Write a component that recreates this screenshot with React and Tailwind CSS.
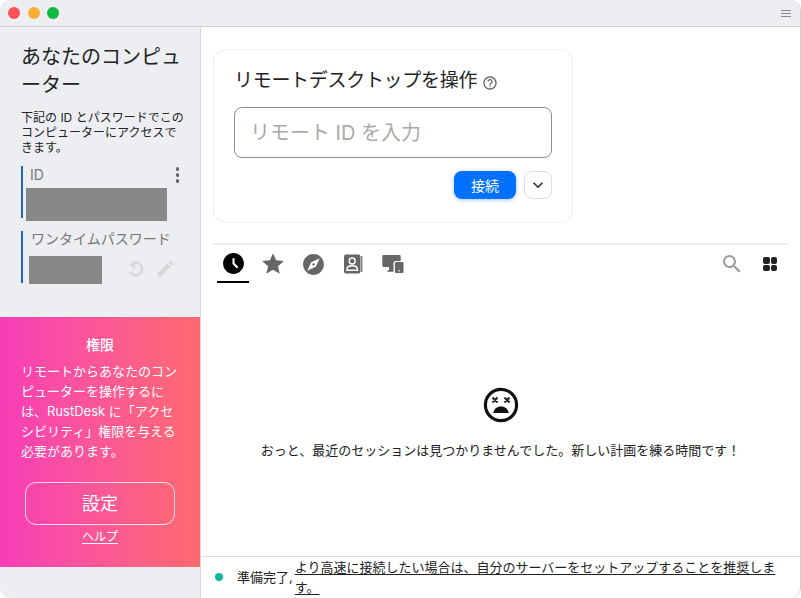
import { MdAccessTimeFilled, MdStar, MdExplore, MdEdit, MdHelpOutline, MdSearch, MdKeyboardArrowDown } from 'react-icons/md';

const font = { fontFamily: '' };

const ContactsIcon = () => (
    <svg width="20" height="20" viewBox="0 0 20 20">
        <rect x="1" y="0.5" width="16.5" height="19" rx="2" fill="#666" />
        <rect x="18.2" y="2" width="1.2" height="16" rx="0.6" fill="#666" />
        <circle cx="9.2" cy="7" r="3" fill="none" stroke="#fff" strokeWidth="1.4" />
        <path d="M4 16.2v-1.2c0-2 2.4-3.2 5.2-3.2s5.2 1.2 5.2 3.2v1.2z" fill="none" stroke="#fff" strokeWidth="1.4" />
    </svg>
);

const DevicesIcon = () => (
    <svg width="22" height="20" viewBox="0 0 22 20">
        <path d="M1.5 1h16a1.2 1.2 0 0 1 1.2 1.2V7h-5.2a2 2 0 0 0-2 2v4H1.5A1.2 1.2 0 0 1 .3 11.8V2.2A1.2 1.2 0 0 1 1.5 1z" fill="#666" />
        <path d="M7 13h4.5v4.8H5.5v-1.6H7z" fill="#666" />
        <path d="M14.2 8h6a1.3 1.3 0 0 1 1.3 1.3v8.4a1.3 1.3 0 0 1-1.3 1.3h-6a1.3 1.3 0 0 1-1.3-1.3V9.3A1.3 1.3 0 0 1 14.2 8zm2 8.2v1h2v-1z" fill="#666" fillRule="evenodd" />
    </svg>
);

const RefreshIcon = () => (
    <svg width="18" height="18" viewBox="0 0 18 18" fill="none" stroke="#d8d8d8" strokeWidth="2.4">
        <path d="M5.2 3.6A6.4 6.4 0 1 1 3.2 12" />
        <path d="M1.6 3.4h6.2v6.2z" fill="#d8d8d8" stroke="none" />
    </svg>
);

const SadFace = () => (
    <svg width="36" height="36" viewBox="0 0 36 36">
        <circle cx="18" cy="18" r="15.6" fill="none" stroke="#111" strokeWidth="3.2" />
        <path d="M9.5 10.5l5 5m0-5l-5 5M21.5 10.5l5 5m0-5l-5 5" stroke="#222" strokeWidth="2.2" fill="none" />
        <path d="M10.2 26c.6-4 3.6-6.6 7.8-6.6s7.2 2.6 7.8 6.6z" fill="#111" />
    </svg>
);

const GridIcon = () => (
    <div className="grid grid-cols-2 gap-[1px]">
        <span className="block w-[6.5px] h-[6.5px] rounded-[2px] bg-[#222]" />
        <span className="block w-[6.5px] h-[6.5px] rounded-[2px] bg-[#222]" />
        <span className="block w-[6.5px] h-[6.5px] rounded-[2px] bg-[#222]" />
        <span className="block w-[6.5px] h-[6.5px] rounded-[2px] bg-[#222]" />
    </div>
);

const Sidebar = () => (
    <div className="w-[201px] shrink-0 flex flex-col border-r border-[#d6d6d8] bg-[#eceef2]">
        <div className="h-[290px] shrink-0 pl-[21px] pr-[14px] pt-[16px]">
            <h1 className="text-[20px] leading-[28px] text-[#222]">あなたのコンピューター</h1>
            <p className="mt-[11px] text-[12px] leading-[15px] text-[#222]">
                下記の ID とパスワードでこのコンピューターにアクセスできます。
            </p>
            <div className="mt-[11px] h-[52px] border-l-2 border-[#1f66c8] relative">
                <div className="flex justify-between items-start pl-[7px] pr-[6px]">
                    <span className="text-[14px] leading-[18px] text-[#777]">ID</span>
                    <div className="flex flex-col gap-[2.5px] mt-[1px] mr-[1px]">
                        <span className="block w-[3.5px] h-[3.5px] rounded-full bg-[#666]" />
                        <span className="block w-[3.5px] h-[3.5px] rounded-full bg-[#666]" />
                        <span className="block w-[3.5px] h-[3.5px] rounded-full bg-[#666]" />
                    </div>
                </div>
                <div className="absolute left-[3px] top-[22px] w-[141px] h-[33px] bg-[#888]" />
            </div>
            <div className="mt-[13px] h-[52px] border-l-2 border-[#1f66c8] relative">
                <div className="pl-[8px] text-[14px] leading-[16px] text-[#777]">ワンタイムパスワード</div>
                <div className="absolute left-[6px] top-[25px] w-[73px] h-[28px] bg-[#888]" />
                <div className="absolute left-[104px] top-[27px] flex items-center gap-[10px]">
                    <RefreshIcon />
                    <MdEdit size={21} color="#d8d8d8" />
                </div>
            </div>
        </div>
        <div className="h-[250px] shrink-0 bg-gradient-to-r from-[#f83cb7] to-[#ff6a6e] px-[21px] pt-[18px] text-white">
            <div className="text-center text-[14px] leading-[20px] font-medium">権限</div>
            <p className="mt-[6px] text-[13px] leading-[20px]">
                リモートからあなたのコンピューターを操作するには、RustDesk に「アクセシビリティ」権限を与える必要があります。
            </p>
            <div className="mt-[21px] mx-[4px] h-[43px] rounded-[11px] border border-white/80 flex items-center justify-center text-[18px]">
                設定
            </div>
            <div className="mt-[4px] text-center text-[12px] leading-[16px]">
                <span className="underline underline-offset-2">ヘルプ</span>
            </div>
        </div>
        <div className="flex-1" />
    </div>
);

const App = () => (
    <div
        className="w-[801px] h-[598px] overflow-hidden flex flex-col bg-white rounded-t-[10px] rounded-b-[10px] border-r border-[#d0d0d2]"
        style={{ fontFamily: 'Inter, "Noto Sans CJK JP", sans-serif' }}
    >
        <div className="h-[27px] shrink-0 flex items-center justify-between pl-[8px] pr-[9px] bg-[#eceef2] border-b border-[#d0d0d2]">
            <div className="flex items-center gap-[7.5px]">
                <span className="block w-[12px] h-[12px] rounded-full bg-[#ff5257]" />
                <span className="block w-[12px] h-[12px] rounded-full bg-[#fdae37]" />
                <span className="block w-[12px] h-[12px] rounded-full bg-[#0fb93f]" />
            </div>
            <div className="flex flex-col gap-[2px]">
                <span className="block w-[10px] h-px bg-[#8a8a8a]" />
                <span className="block w-[10px] h-px bg-[#8a8a8a]" />
                <span className="block w-[10px] h-px bg-[#8a8a8a]" />
            </div>
        </div>
        <div className="flex-1 flex min-h-0">
            <Sidebar />
            <div className="flex-1 min-w-0 flex flex-col">
                <div className="flex-1 min-h-0 pl-[12px] pr-[12px] pt-[22px] flex flex-col">
                    <div className="w-[360px] h-[174px] rounded-[13px] border border-[#eeeeee] pl-[20px] pr-[20px] pt-[18px]">
                        <div className="flex items-center text-[19px] leading-[26px] text-[#222]">
                            <span className="tracking-[-0.3px]">リモートデスクトップを操作</span>
                            <MdHelpOutline size={16} color="#666" className="ml-[5px] mt-[4px]" />
                        </div>
                        <div className="mt-[13px] h-[51px] rounded-[8px] border border-[#8e8e8e] flex items-center pl-[15px] text-[20px] text-[#aaaaaa]">
                            リモート ID を入力
                        </div>
                        <div className="mt-[13px] flex justify-end items-center gap-[8px]">
                            <div className="w-[62px] h-[28px] rounded-[8px] bg-[#0071ff] shadow-[0_1px_4px_rgba(0,80,200,0.35)] text-white text-[14px] flex items-center justify-center">
                                接続
                            </div>
                            <div className="w-[28px] h-[28px] rounded-[8px] border border-[#dddddd] flex items-center justify-center">
                                <MdKeyboardArrowDown size={20} color="#333" />
                            </div>
                        </div>
                    </div>
                    <div className="mt-[20px] border-t-2 border-[#eeeeee]" />
                    <div className="h-[38px] flex items-center pl-[4px] pr-[4px]">
                        <div className="w-[32px] h-[38px] border-b-2 border-black flex items-center justify-center">
                            <MdAccessTimeFilled size={25} color="#000" />
                        </div>
                        <div className="ml-[8px] w-[32px] flex justify-center"><MdStar size={26} color="#666" /></div>
                        <div className="ml-[8px] w-[32px] flex justify-center"><MdExplore size={25} color="#666" /></div>
                        <div className="ml-[8px] w-[32px] flex justify-center"><ContactsIcon /></div>
                        <div className="ml-[8px] w-[32px] flex justify-center"><DevicesIcon /></div>
                        <div className="ml-auto mr-[7px] flex items-center gap-[19px]">
                            <MdSearch size={24} color="#999" />
                            <GridIcon />
                        </div>
                    </div>
                    <div className="flex-1 flex flex-col items-center pt-[104px] text-[13px] text-[#222]">
                        <SadFace />
                        <div className="mt-[17px] leading-[20px]">おっと、最近のセッションは見つかりませんでした。新しい計画を練る時間です！</div>
                    </div>
                </div>
                <div className="h-[42px] shrink-0 border-t border-[#dcdcdc] flex items-start pl-[14px] pr-[12px] text-[13px] text-[#222] overflow-hidden">
                    <span className="mt-[16px] block w-[8px] h-[8px] rounded-full bg-[#14b8a0] shrink-0" />
                    <span className="ml-[14px] mt-[10px] leading-[20px] shrink-0">準備完了,</span>
                    <span className="ml-[2px] leading-[20px] underline underline-offset-2">
                        より高速に接続したい場合は、自分のサーバーをセットアップすることを推奨します。
                    </span>
                </div>
            </div>
        </div>
    </div>
);

export default App;
